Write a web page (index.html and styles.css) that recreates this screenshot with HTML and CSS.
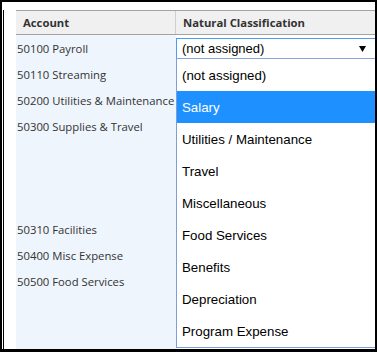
FILE: index.html
```html
<!DOCTYPE html>
<html lang="en">
<head>
  <meta charset="UTF-8">
  <title>Account Classification</title>
  <link rel="stylesheet" href="styles.css">
</head>
<body>

  <div class="frame">
    <div class="inner">
      <div class="thead">
        <div class="th th-account">Account</div>
        <div class="th">Natural Classification</div>
      </div>

      <div class="tbody">
        <!-- Account column -->
        <div class="accounts">
          <div class="acct">50100 Payroll</div>
          <div class="acct">50110 Streaming</div>
          <div class="acct">50200 Utilities &amp; Maintenance</div>
          <div class="acct tall">50300 Supplies &amp; Travel</div>
          <div class="acct">50310 Facilities</div>
          <div class="acct">50400 Misc Expense</div>
          <div class="acct">50500 Food Services</div>
        </div>

        <!-- Classification column with open dropdown -->
        <div class="classes">
          <div class="select">
            <span>(not assigned)</span>
            <svg class="arrow" width="7" height="6" viewBox="0 0 7 6"><path d="M0 0H7L3.5 6Z" fill="#000"/></svg>
          </div>
          <ul class="options">
            <li>(not assigned)</li>
            <li class="active">Salary</li>
            <li>Utilities / Maintenance</li>
            <li>Travel</li>
            <li>Miscellaneous</li>
            <li>Food Services</li>
            <li>Benefits</li>
            <li>Depreciation</li>
            <li>Program Expense</li>
          </ul>
        </div>
      </div>
    </div>
  </div>

</body>
</html>
```

FILE: styles.css
```css
* {
  box-sizing: border-box;
}

body {
  margin: 0;
  background: #fff;
  font-family: "Open Sans", sans-serif;
  font-size: 11.3px;
  color: #333;
}

.frame {
  width: 377px;
  height: 352px;
  border-style: solid;
  border-color: #000;
  border-width: 2px 2px 3px 2px;
  padding: 8px 0 0 1px;
  overflow: hidden;
}

.inner {
  height: 100%;
  border-left: 1px solid #000;
  padding-left: 12px;
  display: flex;
  flex-direction: column;
}

.thead {
  display: flex;
  height: 25px;
  background: #f0f0f0;
  border-top: 1px solid #a3a3a3;
  border-bottom: 1px solid #a3a3a3;
}

.th {
  padding-left: 7px;
  line-height: 23px;
  font-weight: bold;
}

.th-account {
  width: 160px;
  border-right: 1px solid #cfcfcf;
}

.tbody {
  flex: 1;
  display: flex;
}

.accounts {
  width: 160px;
  background: #eef5fd;
  padding-top: 1px;
}

.acct {
  height: 26px;
  line-height: 26px;
  padding-left: 1px;
  white-space: nowrap;
}

.acct.tall {
  height: 103px;
}

.classes {
  flex: 1;
  position: relative;
  padding-top: 3px;
}

.select {
  width: calc(100% + 4px);
  height: 21px;
  border: 1px solid #4d9cf2;
  border-bottom-color: #8ea6dc;
  background: #fff;
  padding-left: 5px;
  display: flex;
  align-items: center;
  font-family: "Liberation Sans", Arial, sans-serif;
  font-size: 13px;
  color: #000;
}

.select span {
  flex: 1;
}

.arrow {
  margin-right: 12px;
}

.options {
  position: absolute;
  top: 24px;
  left: 0;
  width: calc(100% + 4px);
  margin: 0;
  padding: 0;
  list-style: none;
  background: #fff;
  border: 1px solid #7f9ed6;
  border-top: none;
  font-family: "Liberation Sans", Arial, sans-serif;
  font-size: 13.3px;
  color: #000;
}

.options li {
  height: 32px;
  line-height: 30px;
  padding: 2px 0 0 5px;
}

.options li.active {
  background: #1e90ff;
  color: #fff;
}
```
